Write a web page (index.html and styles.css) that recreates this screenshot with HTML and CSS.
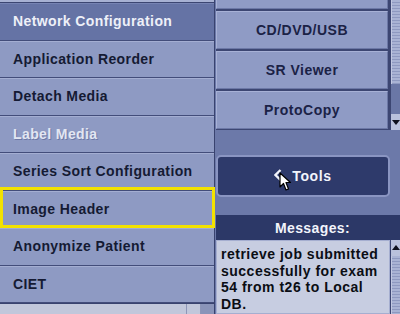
FILE: index.html
```html
<!DOCTYPE html>
<html>
<head>
  <meta charset="UTF-8">
  <link rel="stylesheet" href="styles.css">
</head>
<body>
  <div class="screen">
    <div class="menu">
      <div class="menu-top"></div>
      <ul class="menu-list">
        <li class="item selected">Network Configuration</li>
        <li class="item">Application Reorder</li>
        <li class="item">Detach Media</li>
        <li class="item disabled">Label Media</li>
        <li class="item">Series Sort Configuration</li>
        <li class="item focused">Image Header</li>
        <li class="item">Anonymize Patient</li>
        <li class="item">CIET</li>
      </ul>
      <div class="menu-foot">
        <div class="foot-cell wide"></div>
        <div class="foot-cell"></div>
        <div class="foot-cell dark"></div>
      </div>
    </div>

    <div class="side">
      <div class="apps">
        <div class="app-list">
          <div class="app-btn partial"></div>
          <div class="app-btn">CD/DVD/USB</div>
          <div class="app-btn">SR Viewer</div>
          <div class="app-btn">ProtoCopy</div>
        </div>
        <div class="scrollbar">
          <div class="grip"></div>
          <div class="track"></div>
          <div class="arrow down"></div>
        </div>
      </div>

      <div class="tools-row">
        <div class="tools-btn">
          <svg class="chev" width="8" height="12" viewBox="0 0 8 12">
            <path d="M6.5 1 L1.5 6 L6.5 11" fill="none" stroke="#f2f4fb" stroke-width="2.4"/>
          </svg>
          <span>Tools</span>
        </div>
        <svg class="pointer" width="13" height="20" viewBox="0 0 13 20">
          <path d="M1 1 L1 15 L4.5 11.5 L7 18 L9.5 17 L7 10.5 L11.5 10.5 Z" fill="#ffffff" stroke="#000000" stroke-width="1.2" stroke-linejoin="round"/>
        </svg>
      </div>

      <div class="messages-head">Messages:</div>
      <div class="messages">
        <div class="msg-text">retrieve job submitted<br>successfully for exam<br>54 from t26 to Local<br>DB.</div>
        <div class="scrollbar">
          <div class="arrow up"></div>
          <div class="grip"></div>
        </div>
      </div>
    </div>
  </div>
</body>
</html>
```

FILE: styles.css
```css
* {
  margin: 0;
  padding: 0;
  box-sizing: border-box;
}

body {
  width: 400px;
  height: 314px;
  overflow: hidden;
  background: #6c79a9;
  font-family: 'Liberation Sans', Arial, sans-serif;
  font-weight: bold;
}

.screen {
  display: flex;
  height: 314px;
}

/* left popup menu */
.menu {
  width: 215px;
  flex-shrink: 0;
  display: flex;
  flex-direction: column;
  border-right: 1px solid #39436f;
}

.menu-top {
  height: 3px;
  background: #a7b1d3;
  border-bottom: 1px solid #3c4672;
}

.menu-list {
  list-style: none;
}

.item {
  position: relative;
  height: 37.5px;
  display: flex;
  align-items: center;
  padding-left: 13px;
  font-size: 14px;
  letter-spacing: 0.4px;
  color: #151a33;
  background: #8e9ac3;
  border-bottom: 1px solid #434d7a;
  box-shadow: inset 0 1px 0 #a4aed2;
}

.item.selected {
  background: #6573a5;
  color: #eef0f8;
  box-shadow: inset 0 1px 0 #7683b3;
}

.item.disabled {
  color: #e2e6f2;
  text-shadow: 1px 1px 0 #6d79a6;
}

.item.focused::after {
  content: '';
  position: absolute;
  top: -4px;
  left: 0;
  right: -1px;
  bottom: -1px;
  border: 3px solid #f3e200;
}

.menu-foot {
  flex: 1;
  display: flex;
  background: #c1c7db;
  border-top: 1px solid #39436f;
}

.foot-cell {
  width: 14px;
  border-left: 1px solid #8d96b8;
}

.foot-cell.wide {
  width: auto;
  flex: 1;
  border-left: none;
}

.foot-cell.dark {
  background: #8a94b9;
}

/* right panel */
.side {
  width: 185px;
  display: flex;
  flex-direction: column;
  padding-left: 1px;
}

.apps {
  display: flex;
  height: 130px;
  background: #3c4672;
}

.app-list {
  width: 172px;
  display: flex;
  flex-direction: column;
  gap: 2px;
}

.app-btn {
  height: 38px;
  display: flex;
  align-items: center;
  justify-content: center;
  font-size: 14px;
  letter-spacing: 0.5px;
  color: #1b2246;
  background: #8f9bc5;
  border: 1px solid #a7b1d6;
  border-right-color: #6c78a6;
  border-bottom-color: #6c78a6;
}

.app-btn.partial {
  height: 9px;
  border-top: none;
}

.scrollbar {
  margin-left: 3px;
  width: 9px;
  display: flex;
  flex-direction: column;
  background: #6d7aa9;
}

.grip {
  height: 84px;
  background: repeating-linear-gradient(to bottom, #a9b3d4 0, #a9b3d4 2px, #8e99c0 2px, #8e99c0 3px);
  border-left: 1px solid #c2c9e2;
}

.track {
  flex: 1;
  background: #6a77a6;
}

.arrow {
  height: 16px;
  position: relative;
  background: #b9c1dc;
}

.arrow::after {
  content: '';
  position: absolute;
  left: 1px;
  border-left: 4px solid transparent;
  border-right: 4px solid transparent;
}

.arrow.down::after {
  top: 6px;
  border-top: 5px solid #0d0f1c;
}

.arrow.up::after {
  top: 5px;
  border-bottom: 5px solid #0d0f1c;
}

.tools-row {
  position: relative;
  padding: 25px 0 18px 0;
  width: 174px;
}

.tools-btn {
  height: 42px;
  display: flex;
  align-items: center;
  justify-content: center;
  gap: 10px;
  font-size: 14px;
  letter-spacing: 0.6px;
  color: #f2f4fb;
  background: #2e3a6b;
  border: 2px solid #8a95c2;
  border-radius: 5px;
}

.chev {
  margin-top: -3px;
}

.pointer {
  position: absolute;
  left: 63px;
  top: 42px;
}

.messages-head {
  height: 25px;
  display: flex;
  align-items: center;
  justify-content: center;
  padding-left: 9px;
  font-size: 14px;
  letter-spacing: 0.4px;
  color: #f2f4fb;
  background: #2c3867;
}

.messages {
  flex: 1;
  display: flex;
  background: #3c4672;
}

.msg-text {
  width: 174px;
  padding: 5px 0 0 4px;
  font-size: 14px;
  line-height: 16.5px;
  letter-spacing: 0.5px;
  color: #0b0d14;
  background: #c7cde1;
  border: 1px solid #a5aed0;
}

.messages .scrollbar {
  margin-left: 1px;
}

.messages .grip {
  flex: 1;
  height: auto;
}
```
